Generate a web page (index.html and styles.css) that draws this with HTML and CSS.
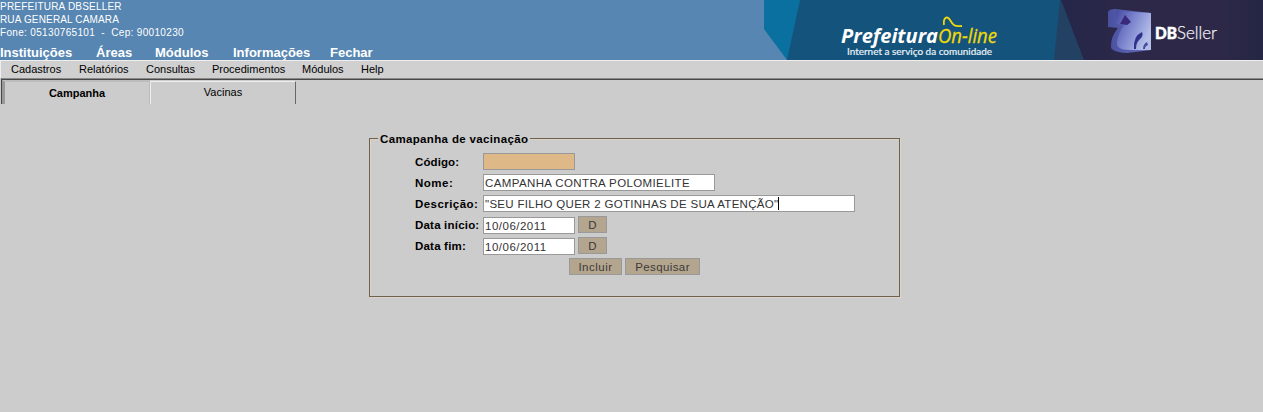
FILE: index.html
```html
<!DOCTYPE html>
<html lang="pt-BR">
<head>
<meta charset="utf-8">
<title>Campanha de vacinação</title>
<link rel="stylesheet" href="styles.css">
</head>
<body>
<header class="top">
  <div class="top-left">
    <div class="org">
      <div class="org-name">PREFEITURA DBSELLER</div>
      <div class="org-street">RUA GENERAL CAMARA</div>
      <div class="org-phone">Fone: 05130765101&nbsp; -&nbsp; Cep: 90010230</div>
    </div>
    <nav class="main-nav"><a class="n1">Instituições</a><a class="n2">Áreas</a><a class="n3">Módulos</a><a class="n4">Informações</a><a>Fechar</a></nav>
  </div>
  <svg class="banner" width="499" height="60" viewBox="0 0 499 60">
    <defs>
      <linearGradient id="navy" x1="0" x2="1"><stop offset="0" stop-color="#24264a"/><stop offset=".35" stop-color="#2d2848"/><stop offset=".8" stop-color="#2d2848"/><stop offset="1" stop-color="#242644"/></linearGradient>
      <linearGradient id="cube" x1="0" y1="0" x2="1" y2=".5"><stop offset="0" stop-color="#454aa2"/><stop offset=".45" stop-color="#7880cb"/><stop offset="1" stop-color="#b4bfe9"/></linearGradient>
      <linearGradient id="side" x1="0" x2="1"><stop offset="0" stop-color="#4a50a0"/><stop offset="1" stop-color="#686fbd"/></linearGradient>
    </defs>
    <path d="M0 0H60V60H23L0 29Z" fill="#0a709f"/>
    <path d="M36 0H300V60H23Z" fill="#14537b"/>
    <path d="M296 0H499V60H290Z" fill="#234162"/>
    <path d="M297 0H499V60H320Z" fill="url(#navy)"/>
    <text class="brand" x="77" y="43" textLength="97" lengthAdjust="spacingAndGlyphs">Prefeitura</text>
    <text class="online" x="174" y="43" textLength="59" lengthAdjust="spacingAndGlyphs">On-line</text>
    <path d="M180 25C179 18 183 15 186 20S190 27 198 26" fill="none" stroke="#f0d90b" stroke-width="1.8"/>
    <text class="slogan" x="83" y="54.500" textLength="145" lengthAdjust="spacingAndGlyphs">Internet a serviço da comunidade</text>
    <path d="M344 12Q345 9 351 9L387 13V50L363 53Q346 52 347 46Q347 36 354 28L344 27Z" fill="url(#side)"/>
    <path d="M352 11L387 13V50L366 50Q351 50 353 41Q355 32 360 25L352 24Z" fill="url(#cube)"/>
    <path d="M361 15L367 22L363 25L356 24Z" fill="#38297b"/>
    <path d="M370 49Q369 36 378 32Q380 36 375 40Q372 43 372 49Z" fill="#30318a"/>
    <path d="M379 49Q379 44 383 42L384 45Q381 46 381 49Z" fill="#4b4c9e"/>
    <text class="db" x="391" y="39" textLength="22" lengthAdjust="spacingAndGlyphs">DB</text>
    <text class="seller" x="413" y="39" textLength="40" lengthAdjust="spacingAndGlyphs">Seller</text>
  </svg>
</header>
<nav class="menu"><a class="m1">Cadastros</a><a class="m2">Relatórios</a><a class="m3">Consultas</a><a class="m4">Procedimentos</a><a class="m5">Módulos</a><a>Help</a></nav>
<div class="tabs"><div class="tab active">Campanha</div><div class="tab">Vacinas</div></div>
<form class="form">
  <fieldset class="panel">
    <legend>Camapanha de vacinação</legend>
    <div class="row"><label class="l-code">Código:</label><span class="field code"></span></div>
    <div class="row"><label class="l-name">Nome:</label><span class="field name">CAMPANHA CONTRA POLOMIELITE</span></div>
    <div class="row"><label class="l-desc">Descrição:</label><span class="field desc"><span>"SEU FILHO QUER 2 GOTINHAS DE SUA ATENÇÃO"</span><i class="caret"></i></span></div>
    <div class="row"><label>Data início:</label><span class="field date">10/06/2011</span><button type="button" class="btn pick">D</button></div>
    <div class="row"><label>Data fim:</label><span class="field date">10/06/2011</span><button type="button" class="btn pick">D</button></div>
    <div class="actions"><button type="button" class="btn inc">Incluir</button><button type="button" class="btn pes">Pesquisar</button></div>
  </fieldset>
</form>
</body>
</html>
```
FILE: styles.css
```css
* { box-sizing: border-box; }
body { margin: 0; height: 412px; overflow: hidden; background: #ccc; color: #000; font-family: "Liberation Sans", Arial, sans-serif; font-size: 11px; }
.top { display: flex; justify-content: space-between; height: 60px; background: #5786b2; color: #fff; }
.banner { display: block; flex: none; }
.org { height: 45px; font-size: 10px; line-height: 13px; white-space: nowrap; }
.org-name { letter-spacing: .21px; }
.org-street { letter-spacing: .15px; }
.org-phone { letter-spacing: .33px; }
.main-nav { display: flex; font-size: 13px; font-weight: bold; line-height: 15px; }
.n1 { width: 96px; }
.n2 { width: 59px; }
.n3 { width: 78px; }
.n4 { width: 97px; }
.menu { display: flex; height: 19px; padding-left: 10px; border-top: 1px solid #eee; border-left: 1px solid #eee; border-bottom: 1px solid #888; background: #d0d0d0; line-height: 17px; }
.m1 { width: 68px; }
.m2 { width: 67px; }
.m3 { width: 66px; }
.m4 { width: 90px; }
.m5 { width: 59px; }
.tabs { display: flex; height: 25px; margin-left: 1px; border-top: 1px solid #484848; border-left: 1px solid #484848; }
.tab { width: 146px; margin-top: 1px; height: 23px; border-top: 1px solid #eee; border-left: 1px solid #eee; border-right: 1px solid #666; text-align: center; line-height: 21px; }
.tab.active { width: 148px; margin-top: 0; height: 24px; border-top: 2px solid #bdbdbd; border-left: 3px solid #999; border-right: 1px solid #bbb; font-weight: bold; line-height: 22px; }
.form { padding: 28px 0 0 369px; }
.panel { width: 531px; height: 165px; margin: 0; padding: 6px 0 0 45px; border: 1px solid #6f614f; box-shadow: 1px 1px 0 #ded4c6, inset 1px 1px 0 #ded4c6; }
legend { height: 13px; margin-left: -37px; padding: 0 2px; background: #ccc; font-size: 11.5px; font-weight: bold; line-height: 14px; white-space: nowrap; letter-spacing: .35px; }
.row { display: flex; align-items: center; height: 21px; }
label { width: 68px; font-size: 11.5px; font-weight: bold; white-space: nowrap; letter-spacing: .2px; }
.l-code { letter-spacing: .1px; }
.l-name { letter-spacing: .5px; }
.l-desc { letter-spacing: .45px; }
.field { display: flex; align-items: center; height: 17px; padding-left: 1px; border: 1px solid #999; background: #fff; color: #333; white-space: nowrap; font-size: 11.5px; letter-spacing: .38px; }
.desc { letter-spacing: .3px; }
.code { width: 92px; background: #deb887; }
.name { width: 232px; }
.desc { width: 372px; }
.date { width: 92px; margin-top: 2px; letter-spacing: .5px; }
.caret { width: 1px; height: 13px; background: #000; }
.btn { height: 17px; padding: 2px 0 0; border: 1px solid #999; background: #b4a58f; color: #3c3a38; font: 11.5px/13px "Liberation Sans", Arial, sans-serif; }
.pick { width: 29px; margin-left: 3px; }
.actions { display: flex; gap: 3px; padding-left: 154px; padding-top: 2px; }
.inc { width: 53px; letter-spacing: .5px; }
.pes { width: 75px; letter-spacing: .4px; }
.brand { font: italic bold 19px "Open Sans", sans-serif; fill: #fff; }
.online { font: italic 500 20px "Open Sans", sans-serif; fill: #f0d90b; stroke: #f0d90b; stroke-width: .3px; }
.slogan { font: 10px Lato, sans-serif; fill: #e8f2f8; stroke: #e8f2f8; stroke-width: .2px; }
.db { font: 900 17px Lato, sans-serif; fill: #fff; stroke: #fff; stroke-width: .5px; }
.seller { font: 300 17px Lato, sans-serif; fill: #f0eef4; stroke: #f0eef4; stroke-width: .25px; }
```
